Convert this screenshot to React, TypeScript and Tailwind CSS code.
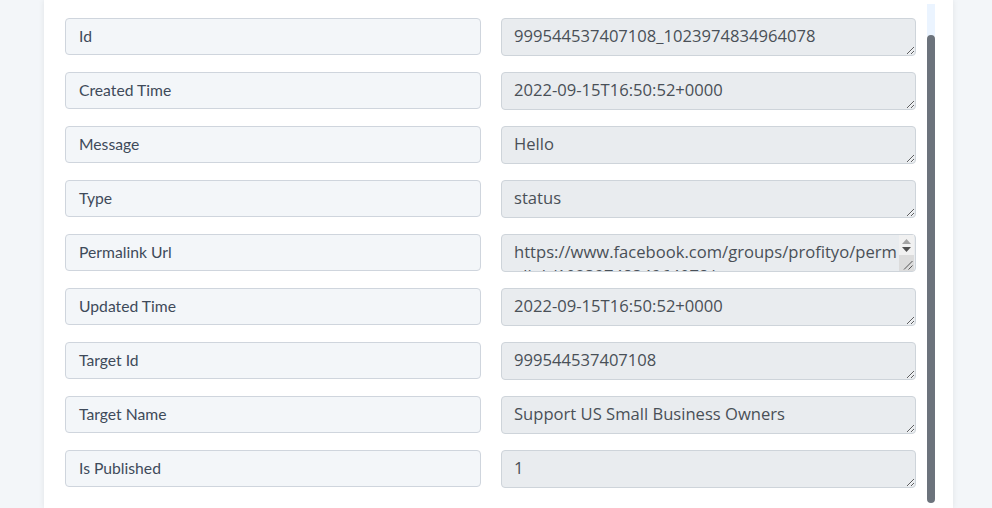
import React from "react";

const rows: { label: string; value: string; scroll?: boolean }[] = [
  { label: "Id", value: "999544537407108_1023974834964078" },
  { label: "Created Time", value: "2022-09-15T16:50:52+0000" },
  { label: "Message", value: "Hello" },
  { label: "Type", value: "status" },
  {
    label: "Permalink Url",
    value: "https://www.facebook.com/groups/profityo/permalink/1023974834964078/",
    scroll: true,
  },
  { label: "Updated Time", value: "2022-09-15T16:50:52+0000" },
  { label: "Target Id", value: "999544537407108" },
  { label: "Target Name", value: "Support US Small Business Owners" },
  { label: "Is Published", value: "1" },
];

function FieldScrollbar() {
  return (
    <div className="pointer-events-none absolute right-[2px] top-[1px] flex h-[36px] w-[15px] flex-col">
      <div className="flex h-[20px] flex-col items-center justify-center gap-[3px] bg-[#f1f1f1]">
        <svg width="9" height="5" viewBox="0 0 9 5">
          <path d="M0 5 L4.5 0 L9 5 Z" fill="#a3a3a3" />
        </svg>
        <svg width="9" height="5" viewBox="0 0 9 5">
          <path d="M0 0 L9 0 L4.5 5 Z" fill="#505050" />
        </svg>
      </div>
      <div className="relative flex-1 bg-[#dcdcdc]">
        <svg className="absolute bottom-[1px] right-[1px]" width="10" height="10" viewBox="0 0 10 10">
          <path d="M9.5 1 L1 9.5 M9.5 5.5 L5.5 9.5" stroke="#555" strokeWidth="1" />
        </svg>
      </div>
    </div>
  );
}

export default function App() {
  return (
    <div className="h-[508px] w-[992px] overflow-hidden bg-[#f3f6f9]">
      <div className="ml-[44px] flex h-[508px] w-[909px] bg-white shadow-[0_0_6px_rgba(0,0,0,0.08)]">
        <div className="flex w-[880px] flex-col gap-[16px] pl-[21px] pt-[18px]">
          {rows.map((r) => (
            <div key={r.label} className="flex items-start gap-[20px]">
              <div
                className="flex h-[37px] w-[416px] items-center rounded-[4px] border border-[#cfd5dd] bg-[#f3f6f9] pl-[13px] text-[15.7px] text-[#3e4a5a]"
                style={{ fontFamily: "Lato, 'Noto Sans', sans-serif" }}
              >
                {r.label}
              </div>
              <div className="relative h-[38px] w-[415px]">
                <textarea
                  readOnly
                  rows={1}
                  value={r.value}
                  className={`block h-[38px] w-[415px] overflow-hidden rounded-[4px] border border-[#ced4da] bg-[#e9ecef] pl-[12px] pt-[5px] text-[16.6px] leading-[24px] text-[#495057] outline-none ${
                    r.scroll ? "pr-[18px]" : "pr-[12px]"
                  }`}
                  style={{ fontFamily: "'Open Sans', 'Noto Sans', sans-serif" }}
                />
                {r.scroll && <FieldScrollbar />}
              </div>
            </div>
          ))}
        </div>
        <div className="ml-[3px] flex w-[8px] flex-col pt-[4px]">
          <div className="h-[32px] bg-[#ebf4ff]" />
          <div className="-mt-[1px] h-[468px] rounded-full bg-[#6c737c]" />
        </div>
      </div>
    </div>
  );
}
